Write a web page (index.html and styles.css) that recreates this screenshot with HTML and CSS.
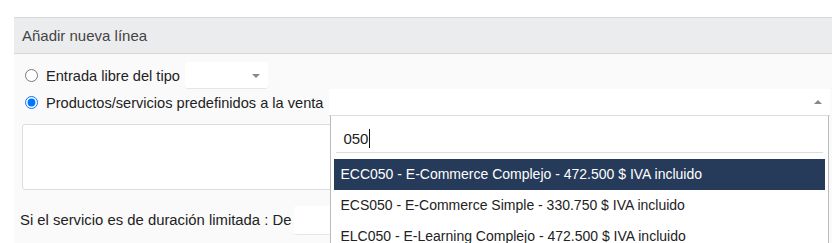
FILE: index.html
```html
<!DOCTYPE html>
<html lang="es">
<head>
    <meta charset="UTF-8">
    <title>Añadir nueva línea</title>
    <link rel="stylesheet" href="styles.css">
</head>
<body>
    <div class="page">
        <div class="panel-title">Añadir nueva línea</div>
        <div class="panel-body">
            <div class="row">
                <label class="radio"><input type="radio" name="tipo"> Entrada libre del tipo</label>
                <div class="mini-select"><span class="arrow down"></span></div>
            </div>
            <div class="row">
                <label class="radio"><input type="radio" name="tipo" checked> Productos/servicios predefinidos a la venta</label>
                <div class="select2">
                    <span class="arrow up"></span>
                    <!-- desplegable abierto -->
                    <div class="dropdown">
                        <div class="search"><span class="typed">050</span><span class="caret"></span></div>
                        <ul class="results">
                            <li class="active">ECC050 - E-Commerce Complejo - 472.500 $ IVA incluido</li>
                            <li>ECS050 - E-Commerce Simple - 330.750 $ IVA incluido</li>
                            <li>ELC050 - E-Learning Complejo - 472.500 $ IVA incluido</li>
                        </ul>
                    </div>
                </div>
            </div>
            <div class="desc"></div>
            <div class="row dates">
                <span>Si el servicio es de duración limitada : De</span>
                <div class="date-input"></div>
            </div>
        </div>
    </div>
</body>
</html>
```

FILE: styles.css
```css
body {
    margin: 0;
    font-family: "Liberation Sans", Arial, sans-serif;
    color: #333;
    background-color: #fff;
    overflow: hidden;
}
.page {
    padding-top: 17px;
    padding-left: 14px;
}
.panel-title {
    height: 35px;
    line-height: 35px;
    padding-left: 8px;
    background-color: #ebecee;
    border-top: 1px solid #d8d8d8;
    border-bottom: 1px solid #d8d8d8;
    font-size: 15px;
    color: #444;
}
.panel-body {
    background-color: #fafafa;
    padding: 8px 2px 10px 10px;
    height: 200px;
}
.row {
    display: flex;
    align-items: center;
    height: 27px;
    font-size: 14.6px;
    color: #222;
}
.radio {
    display: flex;
    align-items: center;
    white-space: nowrap;
}
.radio input {
    margin: 0 8px 0 1px;
    width: 13px;
    height: 13px;
}
.mini-select {
    position: relative;
    width: 83px;
    height: 26px;
    margin-left: 5px;
    background-color: #fff;
    border-radius: 3px;
    border-bottom: 1px solid #e6e6e6;
}
.arrow {
    position: absolute;
    width: 0;
    height: 0;
    border-left: 4px solid transparent;
    border-right: 4px solid transparent;
}
.arrow.down {
    right: 8px;
    top: 12px;
    border-top: 4px solid #888;
}
.arrow.up {
    right: 8px;
    top: 11px;
    border-bottom: 4px solid #888;
}
.select2 {
    position: relative;
    flex: 1;
    margin-left: 6px;
    height: 26px;
    background-color: #fff;
    border-bottom: 1px solid #ddd;
}
.dropdown {
    position: absolute;
    left: 1px;
    top: 26px;
    right: 1px;
    height: 140px;
    background-color: #fff;
    border: 1px solid #bbb;
    border-top-color: #ddd;
    padding: 0 3px;
    z-index: 2;
}
.search {
    display: flex;
    align-items: center;
    height: 28px;
    margin: 0 2px;
    padding: 8px 0 0 7px;
    border-bottom: 1px solid #ddd;
    font-size: 15px;
    color: #222;
}
.caret {
    width: 1px;
    height: 19px;
    background-color: #111;
    margin-left: 1px;
}
.results {
    list-style: none;
    margin: 6px 0 0;
    padding: 0;
}
.results li {
    height: 31px;
    line-height: 31px;
    padding-left: 6px;
    font-size: 14px;
    color: #222;
}
.results li.active {
    background-color: #263a5a;
    color: #fff;
}
.desc {
    width: 320px;
    height: 64px;
    margin: 8px 0 0 -2px;
    background-color: #fff;
    border: 1px solid #ddd;
    border-radius: 3px;
}
.dates {
    margin-top: 16px;
    margin-left: -4px;
    height: 28px;
    font-size: 14.85px;
}
.date-input {
    width: 40px;
    height: 28px;
    margin-left: 3px;
    background-color: #fff;
    border-radius: 3px;
    border-bottom: 1px solid #e6e6e6;
}
```
